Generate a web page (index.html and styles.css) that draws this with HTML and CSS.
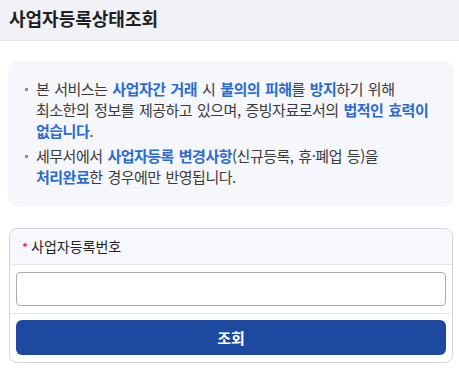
FILE: index.html
```html
<!DOCTYPE html>
<html lang="ko">
<head>
<meta charset="utf-8">
<link rel="stylesheet" href="styles.css">
</head>
<body>
<header class="topbar">
  <h1 class="title">사업자등록상태조회</h1>
</header>
<main class="content">
  <section class="notice">
    <ul class="notice-list">
      <li>본 서비스는 <b>사업자간 거래</b> 시 <b>불의의 피해</b>를 <b>방지</b>하기 위해 최소한의 정보를 제공하고 있으며, 증빙자료로서의 <b>법적인 효력이 없습니다</b>.</li>
      <li>세무서에서 <b>사업자등록 변경사항</b>(신규등록, 휴·폐업 등)을 <b>처리완료</b>한 경우에만 반영됩니다.</li>
    </ul>
  </section>
  <form class="card" onsubmit="return false">
    <div class="card-head">
      <span class="req">*</span><label class="label" for="bno">사업자등록번호</label>
    </div>
    <div class="card-input">
      <input id="bno" class="input" type="text">
    </div>
    <div class="card-foot">
      <button class="btn" type="button">조회</button>
    </div>
  </form>
</main>
</body>
</html>
```

FILE: styles.css
```css
* { box-sizing: border-box; }
html, body { margin: 0; padding: 0; background: #fff; }
body {
  font-family: "Noto Sans CJK KR", "Noto Sans", sans-serif;
  color: #333;
  width: 459px;
}
.topbar {
  height: 41px;
  background: #f0f2f7;
  border-bottom: 1px solid #dfe2e8;
  display: flex;
  align-items: center;
  padding: 0 9px;
}
.title {
  margin: 0;
  font-size: 18px;
  font-weight: 700;
  color: #1f1f1f;
  line-height: 1;
  margin-top: -5px;
}
.content {
  padding: 20px 5px 0 8px;
}
.notice {
  background: #f5f7fc;
  border-radius: 10px;
  padding: 17px 21px 17px 17px;
  height: 146px;
}
.notice-list {
  list-style: none;
  margin: 0;
  padding: 0;
  font-size: 15px;
  line-height: 21px;
  letter-spacing: -0.5px;
  word-spacing: 1.2px;
  word-break: keep-all;
  color: #3a3a3a;
}
.notice-list li {
  position: relative;
  padding-left: 11px;
  margin-bottom: 4px;
}
.notice-list li::before {
  content: "";
  position: absolute;
  left: 0;
  top: 10px;
  width: 3px;
  height: 3px;
  background: #8a8f99;
}
.notice-list b {
  color: #2b6bd1;
  font-weight: 700;
}
.card {
  margin: 21px 1px 0 1px;
  border: 1px solid #cfd5e0;
  border-radius: 8px;
  overflow: hidden;
  height: 135px;
}
.card-head {
  height: 36px;
  background: #f6f8fc;
  border-bottom: 1px solid #e3e7ee;
  display: flex;
  align-items: center;
  padding: 0 12px;
}
.req {
  color: #e0163c;
  font-size: 13px;
  margin-right: 3px;
  line-height: 1;
  margin-top: 2px;
}
.label {
  font-size: 14px;
  color: #222;
  margin-top: -2px;
}
.card-input {
  padding: 7px 6px 7px 6px;
  border-bottom: 1px solid #e3e7ee;
}
.input {
  display: block;
  width: 100%;
  height: 34px;
  border: 1px solid #a9adb3;
  border-radius: 4px;
  background: #fff;
  font-size: 14px;
  padding: 0 8px;
}
.card-foot {
  padding: 6px 6px;
}
.btn {
  display: block;
  width: 100%;
  height: 35px;
  border: 0;
  border-radius: 6px;
  background: #1d4aa0;
  color: #fff;
  font-family: inherit;
  font-size: 15px;
  font-weight: 700;
}
```
